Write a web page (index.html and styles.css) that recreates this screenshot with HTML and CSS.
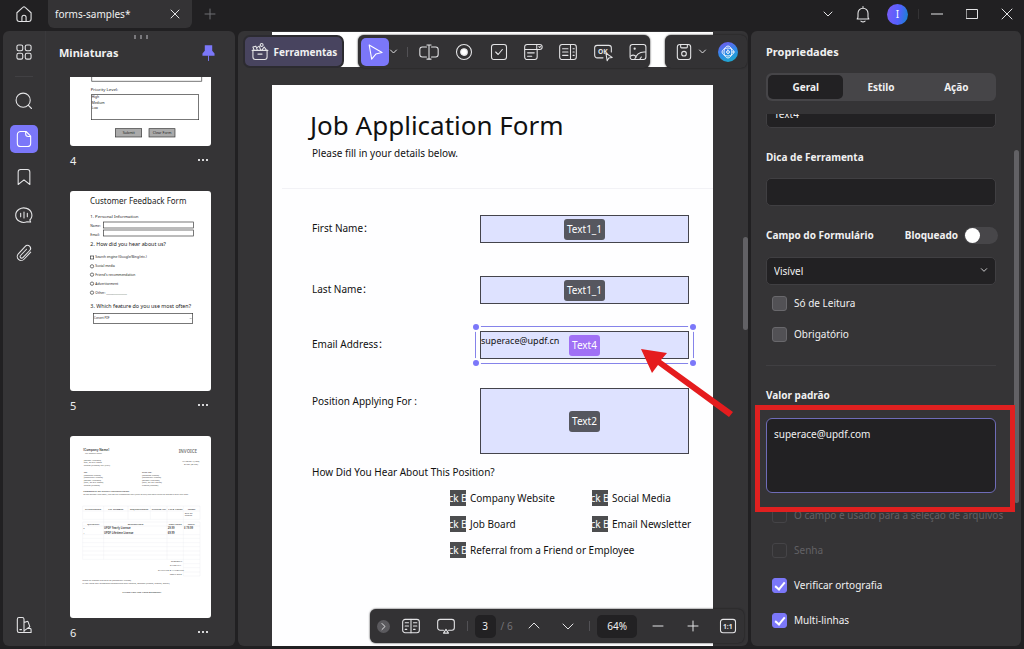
FILE: index.html
```
<!DOCTYPE html>
<html lang="pt">
<head>
    <meta charset="UTF-8">
    <meta name="viewport" content="width=device-width, initial-scale=1.0">
    <title>forms-samples*</title>
    <link rel="stylesheet" href="styles.css">
</head>
<body>

    <!-- Title bar -->
    <header class="titlebar">
        <button class="icon-btn home" aria-label="Home">
            <svg class="icon" viewBox="0 0 24 24"><path d="M3.5 10.5 L10.6 4 a2 2 0 0 1 2.8 0 L20.5 10.5 V18 a3 3 0 0 1 -3 3 H6.5 a3 3 0 0 1 -3 -3 Z M9.5 21 v-5 a2.5 2.5 0 0 1 5 0 v5"/></svg>
        </button>
        <div class="tab">
            <span>forms-samples*</span>
            <button class="icon-btn tab-close" aria-label="Fechar aba">
                <svg class="icon small" viewBox="0 0 12 12"><path d="M2 2 L10 10 M10 2 L2 10"/></svg>
            </button>
        </div>
        <button class="icon-btn new-tab" aria-label="Nova aba">
            <svg class="icon small" viewBox="0 0 12 12"><path d="M6 1 V11 M1 6 H11"/></svg>
        </button>
        <div class="window-tools">
            <button class="icon-btn" aria-label="Mais">
                <svg class="icon small" viewBox="0 0 12 12"><path d="M2 4 L6 8 L10 4"/></svg>
            </button>
            <button class="icon-btn" aria-label="Avisos">
                <svg class="icon" viewBox="0 0 24 24"><path d="M12 3 v2 M5 18 h14 q-1 -1 -1 -3 v-4 a6 6 0 0 0 -12 0 v4 q0 2 -1 3 Z M9.5 20.5 q2.5 2 5 0"/></svg>
            </button>
            <button class="avatar">I</button>
            <span class="divider"></span>
            <button class="icon-btn" aria-label="Minimizar">
                <svg class="icon small" viewBox="0 0 12 12"><path d="M0 6 H12"/></svg>
            </button>
            <button class="icon-btn" aria-label="Maximizar">
                <svg class="icon small" viewBox="0 0 12 12"><rect x="0.5" y="1.5" width="11" height="9"/></svg>
            </button>
            <button class="icon-btn" aria-label="Fechar">
                <svg class="icon small" viewBox="0 0 12 12"><path d="M1 1 L11 11 M11 1 L1 11"/></svg>
            </button>
        </div>
    </header>

    <main class="workspace">

        <!-- Left side: rail and thumbnails -->
        <aside class="side">
            <nav class="rail">
                <button class="icon-btn" aria-label="Painéis">
                    <svg class="icon" viewBox="0 0 24 24"><rect x="3.5" y="3.5" width="7" height="7" rx="2"/><rect x="13.5" y="3.5" width="7" height="7" rx="2"/><rect x="3.5" y="13.5" width="7" height="7" rx="2"/><rect x="13.5" y="13.5" width="7" height="7" rx="2"/></svg>
                </button>
                <hr>
                <button class="icon-btn" aria-label="Buscar">
                    <svg class="icon" viewBox="0 0 24 24"><circle cx="11" cy="11" r="8.5"/><path d="M17.3 17.3 L21 21"/></svg>
                </button>
                <button class="icon-btn active" aria-label="Miniaturas">
                    <svg class="icon" viewBox="0 0 24 24"><path d="M8 3 H14.5 L20 8.5 V17 a4 4 0 0 1 -4 4 H8 a4 4 0 0 1 -4 -4 V7 a4 4 0 0 1 4 -4 Z M14 3 v3 a3 3 0 0 0 3 3 h3"/></svg>
                </button>
                <button class="icon-btn" aria-label="Marcadores">
                    <svg class="icon" viewBox="0 0 24 24"><path d="M5 21 V6 a3 3 0 0 1 3 -3 h8 a3 3 0 0 1 3 3 V21 L12 15.5 Z"/></svg>
                </button>
                <button class="icon-btn" aria-label="Comentários">
                    <svg class="icon" viewBox="0 0 24 24"><path d="M20 20.5 l-1 -2.5 a9.7 8.7 0 1 0 -3.4 2.2 Z M8 10 v4 M12 8.5 v7 M16 10 v4"/></svg>
                </button>
                <button class="icon-btn" aria-label="Anexos">
                    <svg class="icon" viewBox="0 0 24 24"><path d="M20 11 L12 19.5 a4.6 4.6 0 0 1 -6.8 -6.4 L13.5 4 a3.6 3.6 0 0 1 5.3 5 L10.7 17.6 a1.9 1.9 0 0 1 -2.8 -2.6 L15 7.5"/></svg>
                </button>
                <button class="icon-btn rail-bottom" aria-label="Temas">
                    <svg class="icon" viewBox="0 0 24 24"><path d="M6 3 h4 a2 2 0 0 1 2 2 V21 H6 a2 2 0 0 1 -2 -2 V5 a2 2 0 0 1 2 -2 Z M12 9 l3.6 -1.3 a1 1 0 0 1 1.3 .6 L19 14 L12 19 M16 16 h3 a1.5 1.5 0 0 1 1.5 1.5 V21 H12 M7 17.5 h2"/></svg>
                </button>
            </nav>

            <section class="thumbs">
                <div class="handle"><i></i><i></i><i></i></div>
                <div class="thumbs-head">
                    <h2>Miniaturas</h2>
                    <button class="icon-btn pin" aria-label="Fixar painel">
                        <svg viewBox="0 0 14 18"><path d="M3 0 H11 V6 L13.5 9 V11.5 H.5 V9 L3 6 Z"/><rect x="6.5" y="11" width="1" height="6"/></svg>
                    </button>
                </div>
                <div class="thumb-list">
                    <svg class="thumb thumb-cut" viewBox="0 0 423 207">
                        <g class="box"><path d="M65 -10 V13 H395 V-10"/><rect x="64" y="53" width="322" height="75"/></g>
                        <g class="gray-box"><rect x="136" y="155" width="79" height="25"/><rect x="237" y="155" width="78" height="25"/></g>
                        <text x="62" y="43" font-size="13">Priority Level:</text>
                        <g font-size="10"><text x="65" y="64">High</text><text x="65" y="80">Medium</text><text x="65" y="96">Low</text></g>
                        <g font-size="11"><text x="158" y="171">Submit</text><text x="248" y="171">Clear Form</text></g>
                    </svg>
                    <div class="thumb-caption"><span>4</span><button aria-label="Opções da página 4"><i></i><i></i><i></i></button></div>

                    <svg class="thumb" viewBox="0 0 423 600">
                        <text x="60" y="39" font-size="24">Customer Feedback Form</text>
                        <text x="61" y="80" font-size="13">1. Personal Information</text>
                        <text x="61" y="164" font-size="16">2. How did you hear about us?</text>
                        <text x="61" y="351" font-size="16">3. Which feature do you use most often?</text>
                        <g font-size="10">
                            <text x="61" y="108">Name:</text><text x="61" y="135">Email:</text>
                            <text x="76" y="200">Search engine (Google/Bing/etc.)</text>
                            <text x="76" y="227">Social media</text>
                            <text x="76" y="254">Friend's recommendation</text>
                            <text x="76" y="281">Advertisement</text>
                            <text x="76" y="308">Other: ______________</text>
                            <text x="72" y="385" font-size="8">Convert PDF</text>
                        </g>
                        <g class="box">
                            <rect x="100" y="93" width="270" height="18"/><rect x="100" y="117" width="270" height="18"/>
                            <rect x="61" y="195" width="10" height="9"/>
                            <circle cx="66" cy="226" r="5"/><circle cx="66" cy="251" r="5"/><circle cx="66" cy="278" r="5"/><circle cx="66" cy="305" r="5"/>
                            <rect x="70" y="367" width="298" height="30"/>
                            <path d="M359 381 l3 3 l3 -3" stroke-width="1"/>
                        </g>
                    </svg>
                    <div class="thumb-caption"><span>5</span><button aria-label="Opções da página 5"><i></i><i></i><i></i></button></div>

                    <svg class="thumb" viewBox="0 0 423 546">
                        <g font-size="7" opacity="0.8">
                            <text x="40" y="46" font-size="9" font-weight="bold">[Company Name]</text>
                            <text x="44" y="54" font-size="5">Your Company Slogan</text>
                            <text x="326" y="50" font-size="13" font-weight="bold" opacity="0.7">INVOICE</text>
                            <text x="41" y="74">[Street Address]</text><text x="41" y="81">City, ST ZIP Code</text><text x="41" y="89">Phone [Phone] Fax [Fax]</text>
                            <text x="337" y="78">INVOICE #[100]</text><text x="342" y="86">DATE: [DATE]</text>
                            <text x="41" y="110" font-weight="bold">TO:</text><text x="41" y="119">[Contact Name]</text><text x="41" y="127">[Company Name]</text><text x="41" y="134">[Street Address]</text><text x="41" y="142">[City, ST ZIP Code]</text><text x="41" y="150">Phone [Phone]</text>
                            <text x="216" y="110" font-weight="bold">SHIP TO:</text><text x="216" y="119">[Contact Name]</text><text x="216" y="127">[Company Name]</text><text x="216" y="134">[Street Address]</text><text x="216" y="142">[City, ST ZIP Code]</text><text x="216" y="150">Phone [Phone]</text>
                            <g font-weight="bold">
                                <text x="40" y="169">COMMENTS OR SPECIAL INSTRUCTIONS:</text>
                                <text x="45" y="222">SALESPERSON</text><text x="115" y="222">P.O. NUMBER</text><text x="180" y="222">REQUISITIONER</text><text x="245" y="222">SHIPPED VIA</text><text x="295" y="222">F.O.B. POINT</text><text x="353" y="222">TERMS</text>
                                <text x="52" y="267">QUANTITY</text><text x="173" y="267">DESCRIPTION</text><text x="296" y="267">UNIT PRICE</text><text x="353" y="267">TOTAL</text>
                                <text x="102" y="280" font-size="8">UPDF Yearly License</text><text x="102" y="293" font-size="8">UPDF Lifetime License</text>
                                <text x="293" y="280" font-size="8">29.99</text><text x="293" y="293" font-size="8">69.99</text><text x="342" y="280" font-size="8">$ 79.99</text>
                                <text x="157" y="472">THANK YOU FOR YOUR BUSINESS!</text>
                            </g>
                            <text x="40" y="177" font-size="6">To get started right away, just tap any placeholder text (such as this) and start typing to replace it with your own.</text>
                            <text x="344" y="234">Due on</text><text x="344" y="241">receipt</text>
                            <text x="40" y="280">2</text><text x="40" y="293">1</text>
                            <text x="303" y="379">SUBTOTAL</text><text x="300" y="391">SALES TAX</text><text x="264" y="404">SHIPPING &amp; HANDLING</text><text x="299" y="417">TOTAL DUE</text>
                            <text x="37" y="436">Make all checks payable to [Company Name]</text><text x="37" y="443">If you have any questions concerning this invoice, contact [Name, phone, email]</text>
                        </g>
                        <path class="rule" d="M38 210 H390 V250 H38 Z M38 225 H390 M101 210 V370 M174 210 V250 M241 210 V250 M291 210 V370 M340 210 V420 M38 258 H390 V420 H340 M38 258 V370 H390 M38 270 H390 M38 296 H390 M38 307 H390 M38 320 H390 M38 332 H390 M38 345 H390 M38 357 H390 M340 383 H390 M340 395 H390 M340 408 H390"/>
                    </svg>
                    <div class="thumb-caption"><span>6</span><button aria-label="Opções da página 6"><i></i><i></i><i></i></button></div>
                </div>
            </section>
        </aside>

        <!-- Document canvas -->
        <section class="canvas">
            <div class="prev-page"></div>
            <article class="page">
                <h1>Job Application Form</h1>
                <p class="intro">Please fill in your details below.</p>
                <hr>
                <div class="form-grid">
                    <label for="first">First Name：</label>
                    <div class="field"><input id="first" type="text"><span class="tag">Text1_1</span></div>
                    <label for="last">Last Name：</label>
                    <div class="field"><input id="last" type="text"><span class="tag">Text1_1</span></div>
                    <label for="email">Email Address：</label>
                    <div class="field selected">
                        <input id="email" type="text" value="superace@updf.cn"><span class="tag">Text4</span>
                        <div class="selection"><i></i><i></i><i></i><i></i></div>
                    </div>
                    <label for="position">Position Applying For :</label>
                    <div class="field tall"><input id="position" type="text"><span class="tag">Text2</span></div>
                </div>
                <p class="question">How Did You Hear About This Position?</p>
                <div class="options">
                    <label><input type="checkbox"><span class="check-tag">ck B</span>Company Website</label>
                    <label><input type="checkbox"><span class="check-tag">ck B</span>Social Media</label>
                    <label><input type="checkbox"><span class="check-tag">ck B</span>Job Board</label>
                    <label><input type="checkbox"><span class="check-tag">ck B</span>Email Newsletter</label>
                    <label class="wide"><input type="checkbox"><span class="check-tag">ck B</span>Referral from a Friend or Employee</label>
                </div>
                <svg class="arrow" viewBox="0 0 92 68"><path d="M0 0 L26 4 L20 11 L92 63 L88 68 L17 16 L11 24 Z"/></svg>
            </article>

            <!-- Floating tools -->
            <div class="toolbars">
                <button class="tools-btn">
                    <svg class="icon" viewBox="0 0 24 24"><path d="M2.5 10 H21.5 M3.5 10 V18 a3 3 0 0 0 3 3 H17.5 a3 3 0 0 0 3 -3 V10 M5 10 L3.5 6 l3.5 -1 l2 5 M8 7 l3 -2 l2 5 M14 10 l3 -4 l3 4 M9.5 14.5 h5"/><circle cx="14" cy="3.5" r="1.7"/></svg>
                    Ferramentas
                </button>
                <div class="bar bar-main">
                    <button class="icon-btn active" aria-label="Selecionar">
                        <svg class="icon" viewBox="0 0 24 24"><path d="M5 3.5 L20.5 12.5 L13 14.5 L8 20.5 Z"/></svg>
                    </button>
                    <button class="chevron" aria-label="Mais seleção"><svg class="icon" viewBox="0 0 12 12"><path d="M2 4 L6 8 L10 4"/></svg></button>
                    <span class="divider"></span>
                    <div class="tool-set">
                        <button class="icon-btn" aria-label="Campo de texto"><svg class="icon" viewBox="0 0 24 24"><path d="M9 6 H4 a3 3 0 0 0 -3 3 v6 a3 3 0 0 0 3 3 h5 M15 6 h5 a3 3 0 0 1 3 3 v6 a3 3 0 0 1 -3 3 h-5 M12 3.5 v17 M9.5 3.5 h5 M9.5 20.5 h5"/></svg></button>
                        <button class="icon-btn" aria-label="Botão de opção"><svg class="icon" viewBox="0 0 24 24"><circle cx="12" cy="12" r="9"/><circle class="solid" cx="12" cy="12" r="4"/></svg></button>
                        <button class="icon-btn" aria-label="Caixa de seleção"><svg class="icon" viewBox="0 0 24 24"><rect x="3" y="3" width="18" height="18" rx="3"/><path d="M8 12 l3 3 l5 -6"/></svg></button>
                        <button class="icon-btn" aria-label="Lista suspensa"><svg class="icon" viewBox="0 0 24 24"><path d="M17 9 V18 a3 3 0 0 1 -3 3 H5 a3 3 0 0 1 -3 -3 V6 a3 3 0 0 1 3 -3 H20 a3 3 0 0 1 0 6 H2 M16.5 3 v6 M5.5 13 h8 M5.5 17 h5 M19 5.5 l1 1 l1 -1"/></svg></button>
                        <button class="icon-btn" aria-label="Caixa de lista"><svg class="icon" viewBox="0 0 24 24"><rect x="2" y="3" width="20" height="18" rx="3"/><path d="M15 3 V21 M5.5 8 h6.5 M5.5 12 h6.5 M5.5 16 h6.5 M18 8 h1.5 M18 12 h1.5 M18 16 h1.5"/></svg></button>
                        <button class="icon-btn" aria-label="Botão"><svg class="icon" viewBox="0 0 24 24"><path d="M12 19 H5 a3 3 0 0 1 -3 -3 V7 a3 3 0 0 1 3 -3 H19 a3 3 0 0 1 3 3 V12 M15.5 13.5 l7.5 5 l-4 .8 l-2 3.2 Z"/><text x="6" y="14">OK</text></svg></button>
                        <button class="icon-btn" aria-label="Imagem"><svg class="icon" viewBox="0 0 24 24"><rect x="2.5" y="3" width="19" height="18" rx="3"/><path d="M3 17 q4 -3 7 1 M8 21 q3 -10 13 -9 M14 21 l2 -3"/><circle cx="8" cy="8" r=".7"/></svg></button>
                    </div>
                </div>
                <div class="bar bar-save">
                    <button class="icon-btn" aria-label="Salvar"><svg class="icon" viewBox="0 0 24 24"><rect x="4" y="3" width="16" height="18" rx="3"/><path d="M8 3 v3 a1 1 0 0 0 1 1 h6 a1 1 0 0 0 1 -1 v-3"/><circle cx="12" cy="14" r="2.8"/></svg></button>
                    <button class="chevron" aria-label="Opções de salvar"><svg class="icon" viewBox="0 0 12 12"><path d="M2 4 L6 8 L10 4"/></svg></button>
                    <button class="ai-btn" aria-label="Assistente"><svg class="icon" viewBox="0 0 24 24"><ellipse cx="12" cy="12" rx="6" ry="9"/><ellipse cx="12" cy="12" rx="9" ry="6"/><path d="M12 9 l1 2 l2 1 l-2 1 l-1 2 l-1 -2 l-2 -1 l2 -1 Z"/></svg></button>
                </div>
            </div>

            <div class="canvas-scroll"></div>

            <!-- Page navigation -->
            <div class="bar page-nav">
                <button class="expand" aria-label="Expandir"><svg class="icon" viewBox="0 0 12 12"><path d="M4 2 L8 6 L4 10"/></svg></button>
                <button class="icon-btn" aria-label="Modo de leitura"><svg class="icon" viewBox="0 0 24 24"><rect x="2" y="4" width="20" height="16" rx="3"/><path d="M12 4 V20 M5 8 h4 M5 12 h4 M5 16 h2 M15 8 h4 M15 12 h4 M15 16 h2"/></svg></button>
                <button class="icon-btn" aria-label="Apresentação"><svg class="icon" viewBox="0 0 24 24"><path d="M9 17 H5 a3 3 0 0 1 -3 -3 V7 a3 3 0 0 1 3 -3 H19 a3 3 0 0 1 3 3 V14 a3 3 0 0 1 -3 3 H15 M12 16 l3 4.5 h-6 Z"/></svg></button>
                <span class="divider"></span>
                <div class="page-count"><input type="text" value="3" aria-label="Página"><span>/ 6</span></div>
                <button class="icon-btn" aria-label="Página anterior"><svg class="icon small" viewBox="0 0 12 12"><path d="M1 8 L6 3 L11 8"/></svg></button>
                <button class="icon-btn" aria-label="Próxima página"><svg class="icon small" viewBox="0 0 12 12"><path d="M1 4 L6 9 L11 4"/></svg></button>
                <span class="divider"></span>
                <input class="zoom" type="text" value="64%" aria-label="Zoom">
                <button class="icon-btn" aria-label="Reduzir"><svg class="icon small" viewBox="0 0 12 12"><path d="M1 6 H11"/></svg></button>
                <button class="icon-btn" aria-label="Ampliar"><svg class="icon small" viewBox="0 0 12 12"><path d="M6 1 V11 M1 6 H11"/></svg></button>
                <button class="icon-btn" aria-label="Tamanho real"><svg class="icon" viewBox="0 0 24 24"><rect x="3" y="4" width="18" height="16" rx="3"/><text x="6" y="15">1:1</text></svg></button>
            </div>
        </section>

        <!-- Properties -->
        <aside class="props">
            <h2>Propriedades</h2>
            <div class="segments">
                <button class="on">Geral</button>
                <button>Estilo</button>
                <button>Ação</button>
            </div>
            <div class="props-body">
                <input class="box-input name-input" type="text" value="Text4" aria-label="Nome">
                <label class="title" for="tip">Dica de Ferramenta</label>
                <input class="box-input" id="tip" type="text">
                <div class="form-row">
                    <label for="visibility">Campo do Formulário</label>
                    <label class="lock">Bloqueado <input class="toggle" type="checkbox"></label>
                </div>
                <div class="select-wrap">
                    <select class="box-input" id="visibility"><option>Visível</option></select>
                    <svg class="icon" viewBox="0 0 12 12"><path d="M2 4 L6 8 L10 4"/></svg>
                </div>
                <div class="checks checks-tight">
                    <label><input type="checkbox">Só de Leitura</label>
                    <label><input type="checkbox">Obrigatório</label>
                </div>
                <hr>
                <label class="title" for="default">Valor padrão</label>
                <div class="default-wrap">
                    <textarea id="default">superace@updf.com</textarea>
                    <div class="highlight"></div>
                </div>
                <div class="checks">
                    <label class="off"><input type="checkbox" disabled>O campo é usado para a seleção de arquivos</label>
                    <label class="off"><input type="checkbox" disabled>Senha</label>
                    <label><input type="checkbox" checked>Verificar ortografia</label>
                    <label><input type="checkbox" checked>Multi-linhas</label>
                    <label><input type="checkbox" checked aria-label="Rolar texto"></label>
                </div>
            </div>
            <div class="props-scroll"></div>
        </aside>
    </main>

</body>
</html>
```
FILE: styles.css
```
/* Reset */
* {
    margin: 0;
    padding: 0;
    box-sizing: border-box;
}

body {
    height: 100vh;
    display: flex;
    flex-direction: column;
    overflow: hidden;
    background: #212022;
    color: #f0f0f1;
    font-family: 'Noto Sans', 'Noto Sans CJK SC', sans-serif;
    font-size: 10px;
}

button, input, select, textarea {
    font: inherit;
    color: inherit;
    background: none;
    border: none;
    outline: none;
}

h2 {
    font-size: 11px;
    line-height: 16px;
}

/* Icons */
.icon {
    width: 20px;
    height: 20px;
    flex: none;
    fill: none;
    stroke: #e4e4e6;
    stroke-width: 1.3;
    stroke-linejoin: round;
    stroke-linecap: round;
}

.icon.small {
    width: 12px;
    height: 12px;
    stroke-width: 1;
}

.icon .solid {
    fill: #fff;
}

.icon text {
    font-size: 8px;
    font-weight: bold;
    fill: #e4e4e6;
    stroke: none;
}

.icon-btn {
    width: 28px;
    height: 28px;
    flex: none;
    display: flex;
    align-items: center;
    justify-content: center;
    border-radius: 5px;
}

.icon-btn.active {
    background: #7b77f9;
}

.icon-btn.active .icon {
    stroke: #fff;
}

.chevron {
    width: 10px;
    height: 28px;
    display: flex;
    align-items: center;
}

.chevron .icon {
    width: 9px;
    height: 9px;
}

.divider {
    width: 1px;
    height: 10px;
    flex: none;
    background: #525155;
}

/* Title bar */
.titlebar {
    height: 31px;
    flex: none;
    display: flex;
    align-items: flex-start;
    padding: 0 3px 0 10px;
}

.tab {
    width: 144px;
    height: 28px;
    margin: 0 4px 0 10px;
    padding: 0 3px 0 7px;
    display: flex;
    align-items: center;
    justify-content: space-between;
    background: #343335;
    border-radius: 0 0 6px 6px;
}

.new-tab .icon {
    stroke: #6f6e72;
}

.window-tools {
    height: 28px;
    margin-left: auto;
    display: flex;
    align-items: center;
    gap: 7px;
}

.avatar {
    width: 21px;
    height: 21px;
    margin: 0 3px;
    border-radius: 50%;
    background: linear-gradient(100deg, #7b5cf5, #5560ff 55%, #1286cc);
    color: #fff;
}

.window-tools .divider {
    margin-right: -3px;
    background: #343335;
}

/* Workspace */
.workspace {
    flex: 1;
    min-height: 0;
    display: grid;
    grid-template-columns: 232px 1fr 270px;
    grid-template-rows: 100%;
    gap: 3px;
    padding: 0 3px 3px;
}

.side, .props {
    background: #353436;
    border-radius: 6px;
    overflow: hidden;
}

.side {
    display: flex;
}

/* Rail */
.rail {
    width: 43px;
    padding: 7px 0;
    display: flex;
    flex-direction: column;
    align-items: center;
    gap: 10px;
    border-right: 1px solid #3a393c;
}

.rail hr {
    width: 18px;
    border: none;
    border-top: 1px solid #414043;
}

.rail-bottom {
    margin-top: auto;
}

/* Thumbnails */
.thumbs {
    flex: 1;
    display: flex;
    flex-direction: column;
    min-width: 0;
}

.handle {
    display: flex;
    justify-content: center;
    gap: 4px;
    height: 12px;
    padding-top: 4px;
}

.handle i {
    width: 2px;
    height: 4px;
    background: #7a797d;
}

.thumbs-head {
    height: 34px;
    padding: 0 13px 14px 13px;
    display: flex;
    align-items: center;
    justify-content: space-between;
}

.pin {
    width: 28px;
}

.pin svg {
    width: 13px;
    height: 17px;
    fill: #7b77f9;
}

.thumb-list {
    flex: 1;
    min-height: 0;
    overflow: hidden;
    padding: 0 24px;
}

.thumb {
    width: 100%;
    display: block;
    background: #fff;
    border-radius: 3px;
}

.thumb-cut {
    border-radius: 0 0 3px 3px;
}

.thumb text {
    fill: #222;
}

.thumb .box {
    fill: none;
    stroke: #333;
    stroke-width: 2;
}

.thumb .gray-box {
    fill: #aaa;
    stroke: #333;
    stroke-width: 2;
}

.thumb .rule {
    fill: none;
    stroke: #e6e9f0;
    stroke-width: 1;
}

.thumb-caption {
    height: 28px;
    margin-bottom: 17px;
    display: flex;
    align-items: center;
    justify-content: space-between;
    font-size: 11px;
}

.thumb-caption button {
    width: 16px;
    height: 16px;
    display: flex;
    align-items: center;
    justify-content: center;
    gap: 2px;
}

.thumb-caption i {
    width: 2px;
    height: 2px;
    background: #d8d8da;
}

/* Canvas */
.canvas {
    position: relative;
    overflow: hidden;
    background: #353436;
    border-radius: 6px;
    padding: 1px 35px 0 34px;
    display: flex;
    flex-direction: column;
}

.prev-page {
    height: 35px;
    flex: none;
    background: #fff;
}

.page {
    position: relative;
    flex: 1;
    margin-top: 18px;
    padding: 20px 24px 0 38px;
    background: #fefeff;
    color: #111;
}

.page h1 {
    font-size: 26px;
    font-weight: 400;
    line-height: 40px;
}

.page p {
    line-height: 16px;
    padding-left: 2px;
}

.page hr {
    margin: 27px -24px 26px -28px;
    border: none;
    border-top: 1px solid #f2f2f6;
}

.form-grid {
    display: grid;
    grid-template-columns: 170px 1fr;
    grid-template-rows: 61px 55px 57px 66px;
}

.form-grid > label {
    padding-left: 2px;
    line-height: 26px;
}

.field {
    position: relative;
    height: 28px;
    display: flex;
    align-items: center;
    justify-content: center;
}

.field.tall {
    height: 66px;
}

.field input {
    width: 100%;
    height: 100%;
    border: 1px solid #44444c;
    background: #dee2ff;
    color: #111;
    font-size: 9px;
}

.selected input {
    padding-bottom: 9px;
}

.tag {
    position: absolute;
    padding: 0 3px;
    border-radius: 3px;
    background: #56575f;
    color: #fff;
    line-height: 21px;
}

.selected .tag {
    background: #a070f5;
}

/* Selection frame with a handle in each corner */
.selection {
    position: absolute;
    inset: -5px;
    border: 1px solid #8583ea;
}

.selection i {
    position: absolute;
    width: 6px;
    height: 6px;
    border-radius: 50%;
    background: #7b77f9;
    box-shadow: 0 0 0 2px #fefeff;
}

.selection i:nth-child(1) { top: -3px; left: -3px; }
.selection i:nth-child(2) { top: -3px; right: -3px; }
.selection i:nth-child(3) { bottom: -3px; left: -3px; }
.selection i:nth-child(4) { bottom: -3px; right: -3px; }

.page .question {
    margin: 10px 0;
}

.options {
    margin-left: 140px;
    display: grid;
    grid-template-columns: 142px 1fr;
    gap: 10px 0;
}

.options label {
    display: flex;
    align-items: center;
    gap: 4px;
    height: 16px;
    white-space: nowrap;
}

.options .wide {
    grid-column: span 2;
}

.options input {
    position: absolute;
    opacity: 0;
}

.check-tag {
    width: 16px;
    height: 16px;
    flex: none;
    display: flex;
    justify-content: center;
    overflow: hidden;
    background: #4c4d4f;
    color: #fff;
    line-height: 16px;
}

.arrow {
    position: absolute;
    left: 369px;
    top: 264px;
    width: 92px;
    height: 68px;
    fill: #e51c1e;
    z-index: 1;
}

/* Floating bars */
.toolbars {
    position: absolute;
    top: 4px;
    left: 5px;
    right: 1px;
    display: flex;
    justify-content: space-between;
}

.bar {
    display: flex;
    align-items: center;
    background: #333234;
    border-radius: 6px;
    box-shadow: 0 0 2px #19181a;
}

.tools-btn {
    width: 101px;
    height: 33px;
    display: flex;
    align-items: center;
    justify-content: center;
    gap: 4px;
    border: 2px solid #2c2b30;
    border-radius: 7px;
    background: #48445f;
    font-weight: bold;
}

.bar-main {
    flex: 1;
    height: 33px;
    margin: 0 15px 0 14px;
    padding: 0 0 0 3px;
}

.bar-main .divider {
    margin: 0 9px 0 8px;
}

.tool-set {
    flex: 1;
    display: flex;
    justify-content: space-between;
}

.tool-set .icon-btn {
    width: 24px;
}

.bar-save {
    width: 82px;
    height: 33px;
    padding: 0 9px 0 5px;
}

.ai-btn {
    width: 20px;
    height: 20px;
    margin-left: auto;
    border-radius: 50%;
    background: linear-gradient(160deg, #7a55f0, #2f8ae8 50%, #1bb0c8);
}

.ai-btn .icon {
    width: 16px;
    height: 16px;
    margin: 2px;
    stroke: #fff;
    display: block;
}

.canvas-scroll {
    position: absolute;
    top: 206px;
    right: 0;
    width: 5px;
    height: 93px;
    border-radius: 3px;
    background: #626165;
}

/* Page navigation */
.page-nav {
    position: absolute;
    bottom: 3px;
    right: 4px;
    width: 374px;
    height: 34px;
    padding: 0 2px 0 7px;
    justify-content: space-between;
}

.expand {
    width: 13px;
    height: 13px;
    border-radius: 50%;
    background: #5b5a5e;
    display: flex;
    align-items: center;
    justify-content: center;
}

.expand .icon {
    width: 9px;
    height: 9px;
}

.page-count {
    display: flex;
    align-items: center;
    gap: 5px;
    color: #747377;
}

.page-count input, .zoom {
    width: 21px;
    height: 23px;
    border-radius: 5px;
    background: #222123;
    color: #f0f0f1;
    text-align: center;
}

.zoom {
    width: 40px;
}

/* Properties */
.props {
    position: relative;
    padding: 13px 25px 0 15px;
    display: flex;
    flex-direction: column;
}

.segments {
    flex: none;
    height: 28px;
    margin-top: 13px;
    padding: 2px;
    display: flex;
    border-radius: 6px;
    background: #464548;
}

.segments button {
    flex: 1;
    border-radius: 5px;
    font-weight: bold;
}

.segments .on {
    background: #222123;
}

.props-body {
    flex: 1;
    min-height: 0;
    margin: 13px -25px 0 -15px;
    padding: 0 25px 0 15px;
    overflow: hidden;
}

.box-input {
    display: block;
    width: 100%;
    height: 28px;
    padding: 0 7px;
    border: 1px solid #403f42;
    border-radius: 5px;
    background: #222123;
    appearance: none;
}

/* scrolled half out of view */
.name-input {
    margin-top: -14px;
}

.title {
    display: block;
    margin: 21px 0 13px;
    font-weight: bold;
    line-height: 16px;
}

.form-row {
    height: 18px;
    margin: 20px -2px 13px 0;
    display: flex;
    align-items: center;
    justify-content: space-between;
    font-weight: bold;
}

.lock {
    display: flex;
    align-items: center;
    gap: 6px;
}

.toggle {
    appearance: none;
    width: 34px;
    height: 17px;
    border-radius: 9px;
    background: #474649;
}

.toggle::before {
    content: "";
    display: block;
    width: 15px;
    height: 15px;
    margin: 1px;
    border-radius: 50%;
    background: #fff;
}

.select-wrap {
    position: relative;
}

.select-wrap .icon {
    position: absolute;
    top: 9px;
    right: 8px;
    width: 8px;
    height: 8px;
}

.checks {
    margin-top: 14px;
    display: flex;
    flex-direction: column;
    gap: 19px;
}

.checks-tight {
    margin-top: 10px;
    gap: 15px;
}

.checks label {
    height: 16px;
    padding-left: 6px;
    display: flex;
    align-items: center;
    gap: 7px;
    white-space: nowrap;
}

.checks input {
    appearance: none;
    width: 15px;
    height: 15px;
    flex: none;
    border: 1px solid #69686c;
    border-radius: 3px;
    background: #525155;
}

.checks input:checked {
    background: #7b77f9;
    border-color: #7b77f9;
}

.checks input:checked::before {
    content: "";
    display: block;
    width: 4px;
    height: 8px;
    margin: 1px 0 0 4px;
    border: solid #fff;
    border-width: 0 2px 2px 0;
    transform: rotate(40deg);
}

.checks .off {
    color: #626165;
}

.checks .off input {
    background: none;
    border-color: #454447;
}

.props-body hr {
    margin-top: 23px;
    border: none;
    border-top: 1px solid #403f42;
}

.default-wrap {
    position: relative;
    margin-top: 15px;
}

.default-wrap textarea {
    display: block;
    width: 100%;
    height: 75px;
    padding: 8px 7px;
    border: 1px solid #6f6cb8;
    border-radius: 6px;
    background: #222123;
    resize: none;
}

.highlight {
    position: absolute;
    inset: -13px -19px -19px -11px;
    border: 5px solid #e02020;
    z-index: 1;
}

.props-scroll {
    position: absolute;
    top: 119px;
    right: 2px;
    width: 5px;
    height: 353px;
    border-radius: 3px;
    background: #626165;
}
```
